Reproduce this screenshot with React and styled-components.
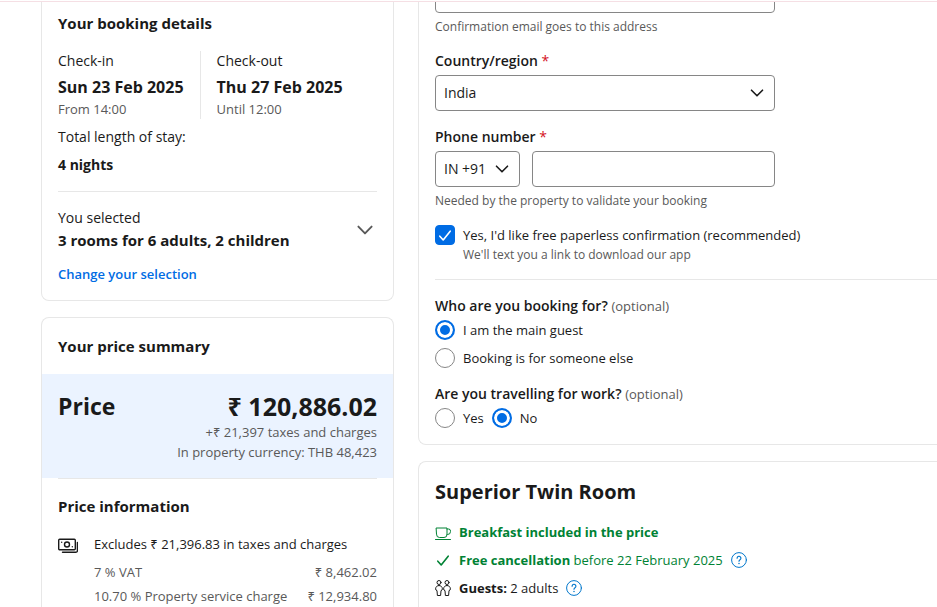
import React, { useState } from "react";
import styled, { createGlobalStyle } from "styled-components";

const GlobalStyle = createGlobalStyle`
  * {
    box-sizing: border-box;
  }

  body {
    margin: 0;
    background: #fff;
    color: #1a1a1a;
    font-family: "Segoe UI", "Open Sans", "Noto Sans", sans-serif;
    font-size: 13px;
    line-height: 20px;
  }
`;

const Page = styled.div`
  display: flex;
  flex-direction: column;
  min-height: 100vh;
  overflow: hidden;
`;

const TopBar = styled.header`
  height: 2px;
  border-bottom: 1px solid #f5dfe4;
`;

const Columns = styled.main`
  flex: 1;
  display: grid;
  grid-template-columns: 353px minmax(0, 1fr);
  gap: 24px;
  padding-left: 41px;
`;

const Column = styled.div`
  display: flex;
  flex-direction: column;
  gap: 16px;
`;

const Card = styled.section`
  border: 1px solid #e7e7e7;
  border-radius: 8px;
  ${({ $open }) =>
    $open === "top" &&
    "border-top: 0; border-top-left-radius: 0; border-top-right-radius: 0;"}
  ${({ $open }) =>
    $open === "bottom" &&
    "flex: 1; border-bottom: 0; border-bottom-left-radius: 0; border-bottom-right-radius: 0;"}
  ${({ $bleed }) =>
    $bleed &&
    "border-right: 0; border-top-right-radius: 0; border-bottom-right-radius: 0;"}
`;

const CardBody = styled.div`
  padding: ${({ $top = 16, $right = 16, $bottom = 16 }) =>
    `${$top}px ${$right}px ${$bottom}px 16px`};
`;

const Heading = styled.h2`
  margin: 0;
  font-size: 15px;
  font-weight: 700;
  line-height: 24px;
`;

const Divider = styled.hr`
  margin: ${({ $flush }) => ($flush ? "0 16px" : "16px 0")};
  border: 0;
  border-top: 1px solid #e7e7e7;
`;

const Dates = styled.div`
  display: flex;
  margin: 16px 0 8px;
`;

const DateBlock = styled.div`
  display: flex;
  flex-direction: column;

  & + & {
    margin-left: 16px;
    padding-left: 16px;
    border-left: 1px solid #e7e7e7;
  }
`;

const Medium = styled.span`
  font-size: 14px;
  font-weight: 500;
`;

const BigText = styled.strong`
  font-size: 15px;
  font-weight: 700;
  line-height: 24px;
`;

const DateText = styled(BigText)`
  margin-top: 4px;
  font-size: 16px;
`;

const Muted = styled.span`
  color: #595959;
  font-size: 13px;
`;

const Stay = styled.div`
  display: flex;
  flex-direction: column;
  gap: 8px;
  font-size: 14px;
`;

const SelectedRow = styled.div`
  display: flex;
  justify-content: space-between;
  align-items: center;
  margin-bottom: 12px;
`;

const SelectedText = styled.div`
  display: flex;
  flex-direction: column;
`;

const IconButton = styled.button`
  display: flex;
  padding: 0;
  border: 0;
  background: none;
  color: ${({ $color = "#595959" }) => $color};
  cursor: pointer;
`;

const TextLink = styled.a`
  display: block;
  color: #006ce4;
  font-weight: 600;
  text-decoration: none;
`;

const PricePanel = styled.div`
  display: flex;
  justify-content: space-between;
  padding: 16px;
  background: #ebf3ff;
`;

const PriceTitle = styled.div`
  font-size: ${({ $large }) => ($large ? "25px" : "23px")};
  font-weight: 700;
  line-height: 32px;
`;

const PriceAmount = styled.div`
  display: flex;
  flex-direction: column;
  text-align: right;
`;

const PriceInfo = styled.div`
  display: grid;
  grid-template-columns: 20px 1fr;
  gap: 16px;
  margin-top: 16px;
`;

const Charges = styled.dl`
  display: grid;
  grid-template-columns: 1fr auto;
  gap: 4px;
  margin: 8px 0 0;
  color: #595959;

  dd {
    margin: 0;
    text-align: right;
  }
`;

const Field = styled.div`
  display: flex;
  flex-direction: column;
  gap: 4px;
  max-width: 340px;
  margin-bottom: 16px;
`;

const Label = styled.label`
  font-size: 14px;
  font-weight: 600;
`;

const Required = styled.span`
  color: #d4111e;
  font-weight: 400;
`;

const Hint = styled.div`
  margin-bottom: -2px;
  color: #595959;
  font-size: 12px;
  line-height: 20px;
`;

const Input = styled.input`
  flex: 1;
  min-width: 0;
  height: 36px;
  padding: 0 8px;
  border: 1px solid #868686;
  border-radius: 4px;
  background: #fff;
  color: inherit;
  font: inherit;
`;

const CutOff = styled.div`
  display: flex;
  align-items: flex-end;
  height: 11px;
  overflow: hidden;

  input {
    flex-shrink: 0;
  }
`;

const SelectBox = styled.div`
  display: grid;
  align-items: center;
  width: ${({ $width = "100%" }) => $width};

  > * {
    grid-area: 1 / 1;
  }

  svg {
    justify-self: end;
    margin-right: 8px;
    pointer-events: none;
  }
`;

const Select = styled.select`
  appearance: none;
  width: 100%;
  height: 36px;
  padding: 0 8px;
  border: 1px solid #868686;
  border-radius: 4px;
  background: #fff;
  color: inherit;
  font: inherit;
  font-size: 14px;
`;

const PhoneRow = styled.div`
  display: flex;
  gap: 12px;
`;

const Choice = styled.label`
  display: flex;
  gap: 8px;
`;

const TickBox = styled.span`
  display: grid;
  place-items: center;
  width: 20px;
  height: 20px;
  color: #fff;

  > * {
    grid-area: 1 / 1;
  }

  svg {
    pointer-events: none;
  }
`;

const Checkbox = styled.input.attrs({ type: "checkbox" })`
  appearance: none;
  width: 20px;
  height: 20px;
  margin: 0;
  border: 1px solid #868686;
  border-radius: 4px;

  &:checked {
    border-color: #006ce4;
    background: #006ce4;
  }
`;

const Radio = styled.input.attrs({ type: "radio" })`
  appearance: none;
  flex-shrink: 0;
  width: 20px;
  height: 20px;
  margin: 0;
  border: 1px solid #868686;
  border-radius: 50%;
  background: #fff;

  &:checked {
    border: 2px solid #006ce4;
    background: #006ce4;
    box-shadow: inset 0 0 0 3px #fff;
  }
`;

const Question = styled.fieldset`
  margin: 0;
  padding: 0;
  border: 0;

  & + & {
    margin-top: 16px;
  }
`;

const Legend = styled.legend`
  margin-bottom: 4px;
  padding: 0;
  font-size: 14px;
  font-weight: 600;

  span {
    font-weight: 400;
  }
`;

const Options = styled.div`
  display: flex;
  flex-direction: ${({ $inline }) => ($inline ? "row" : "column")};
  gap: 8px;
`;

const RoomTitle = styled.h2`
  margin: 0 0 16px;
  font-size: 20px;
  font-weight: 700;
  line-height: 28px;
`;

const Features = styled.ul`
  display: flex;
  flex-direction: column;
  gap: 8px;
  margin: 0;
  padding: 0;
  list-style: none;
`;

const Feature = styled.li`
  display: flex;
  align-items: center;
  gap: 8px;
  color: ${({ $green }) => ($green ? "#008234" : "inherit")};
`;

const ChevronDown = ({ size = 20 }) => (
  <svg width={size} height={size} viewBox="0 0 20 20" fill="none" stroke="currentColor" strokeWidth="1.6" strokeLinecap="round" strokeLinejoin="round">
    <path d="M4.5 7.2 10 12.8l5.5-5.6" />
  </svg>
);

const Tick = () => (
  <svg width="16" height="16" viewBox="0 0 16 16" fill="none" stroke="currentColor" strokeWidth="1.6" strokeLinecap="round" strokeLinejoin="round">
    <path d="M2.8 9.2 6.2 13 13.2 4.2" />
  </svg>
);

const MoneyIcon = () => (
  <svg width="20" height="20" viewBox="0 0 20 20" fill="none" stroke="currentColor" strokeWidth="1.4" strokeLinecap="round" strokeLinejoin="round">
    <rect x="0.7" y="5.2" width="16.6" height="10.6" rx="1" />
    <circle cx="9" cy="10.5" r="2.5" />
    <path d="M3.7 8.3h.01M14.3 12.7h.01" />
    <path d="M19.4 8.5v8.200a1.600 1.600 0 0 1-1.600 1.600H4.500" />
  </svg>
);

const CupIcon = () => (
  <svg width="16" height="16" viewBox="0 0 16 16" fill="none" stroke="currentColor" strokeLinecap="round" strokeLinejoin="round">
    <path d="M1.500 4h10.500v6.500a3 3 0 0 1-3 3h-4.500a3 3 0 0 1-3-3z" />
    <path d="M12 5h1.500a2 2 0 0 1 2 2v.5a3 3 0 0 1-3 3H12" />
    <path d="M.5 15.500h15" />
  </svg>
);

const GuestsIcon = () => (
  <svg width="16" height="16" viewBox="0 0 16 16" fill="none" stroke="currentColor" strokeLinecap="round" strokeLinejoin="round">
    {[0, 8].map((x) => (
      <g key={x} transform={`translate(${x} 0)`}>
        <circle cx="4" cy="2.500" r="2" />
        <path d="M4 5.500c-2 0-3.300 1.400-3.400 3.400 0 .9.500 1.600 1.400 1.700l.4 4.900h3.200l.4-4.900c.9-.1 1.400-.8 1.400-1.700C7.300 6.900 6 5.500 4 5.500z" />
      </g>
    ))}
  </svg>
);

const HelpIcon = () => (
  <svg width="16" height="16" viewBox="0 0 16 16" fill="none" stroke="currentColor" strokeLinecap="round" strokeLinejoin="round">
    <circle cx="8" cy="8" r="7.400" />
    <path d="M6.100 6.200a1.900 1.900 0 1 1 2.900 1.600c-.6.400-1 .7-1 1.400" strokeWidth="1.200" />
    <path d="M8 11.500h.01" strokeWidth="1.500" />
  </svg>
);

const charges = [
  { name: "7 % VAT", amount: "₹ 8,462.02" },
  { name: "10.70 % Property service charge", amount: "₹ 12,934.80" },
];

const BookingDetails = () => (
  <Card $open="top">
    <CardBody $top={9}>
      <Heading>Your booking details</Heading>
      <Dates>
        <DateBlock>
          <Medium>Check-in</Medium>
          <DateText>Sun 23 Feb 2025</DateText>
          <Muted>From 14:00</Muted>
        </DateBlock>
        <DateBlock>
          <Medium>Check-out</Medium>
          <DateText>Thu 27 Feb 2025</DateText>
          <Muted>Until 12:00</Muted>
        </DateBlock>
      </Dates>
      <Stay>
        <Medium>Total length of stay:</Medium>
        <strong>4 nights</strong>
      </Stay>
      <Divider />
      <SelectedRow>
        <SelectedText>
          <Medium>You selected</Medium>
          <BigText>3 rooms for 6 adults, 2 children</BigText>
        </SelectedText>
        <IconButton type="button" aria-label="Show selected rooms">
          <ChevronDown size={24} />
        </IconButton>
      </SelectedRow>
      <TextLink href="#selection">Change your selection</TextLink>
    </CardBody>
  </Card>
);

const PriceSummary = () => (
  <Card $open="bottom">
    <CardBody>
      <Heading>Your price summary</Heading>
    </CardBody>
    <PricePanel>
      <PriceTitle>Price</PriceTitle>
      <PriceAmount>
        <PriceTitle $large>₹ 120,886.02</PriceTitle>
        <Muted>+₹ 21,397 taxes and charges</Muted>
        <Muted>In property currency: THB 48,423</Muted>
      </PriceAmount>
    </PricePanel>
    <Divider $flush />
    <CardBody $top={15} $bottom={0}>
      <Heading>Price information</Heading>
      <PriceInfo>
        <MoneyIcon />
        <div>
          <div>Excludes ₹ 21,396.83 in taxes and charges</div>
          <Charges>
            {charges.map((it) => (
              <React.Fragment key={it.name}>
                <dt>{it.name}</dt>
                <dd>{it.amount}</dd>
              </React.Fragment>
            ))}
          </Charges>
        </div>
      </PriceInfo>
    </CardBody>
  </Card>
);

const GuestForm = () => {
  const [paperless, setPaperless] = useState(true);
  const [guest, setGuest] = useState("main");
  const [work, setWork] = useState("no");

  return (
    <Card $open="top" $bleed>
      <CardBody $top={0} $right={0}>
        <Field>
          <CutOff>
            <Input type="email" aria-label="Email address" />
          </CutOff>
          <Hint>Confirmation email goes to this address</Hint>
        </Field>
        <Field>
          <Label htmlFor="country">
            Country/region <Required>*</Required>
          </Label>
          <SelectBox>
            <Select id="country" defaultValue="in">
              <option value="in">India</option>
            </Select>
            <ChevronDown />
          </SelectBox>
        </Field>
        <Field>
          <Label htmlFor="phone">
            Phone number <Required>*</Required>
          </Label>
          <PhoneRow>
            <SelectBox $width="85px">
              <Select aria-label="Country code" defaultValue="91">
                <option value="91">IN +91</option>
              </Select>
              <ChevronDown />
            </SelectBox>
            <Input id="phone" type="tel" />
          </PhoneRow>
          <Hint>Needed by the property to validate your booking</Hint>
        </Field>
        <Choice>
          <TickBox>
            <Checkbox
              checked={paperless}
              onChange={(e) => setPaperless(e.target.checked)}
            />
            {paperless && <Tick />}
          </TickBox>
          <div>
            Yes, I'd like free paperless confirmation (recommended)
            <Hint>We'll text you a link to download our app</Hint>
          </div>
        </Choice>
        <Divider />
        <Question>
          <Legend>
            Who are you booking for? <Muted>(optional)</Muted>
          </Legend>
          <Options>
            <Choice>
              <Radio name="guest" checked={guest === "main"} onChange={() => setGuest("main")} />
              I am the main guest
            </Choice>
            <Choice>
              <Radio name="guest" checked={guest === "other"} onChange={() => setGuest("other")} />
              Booking is for someone else
            </Choice>
          </Options>
        </Question>
        <Question>
          <Legend>
            Are you travelling for work? <Muted>(optional)</Muted>
          </Legend>
          <Options $inline>
            <Choice>
              <Radio name="work" checked={work === "yes"} onChange={() => setWork("yes")} />
              Yes
            </Choice>
            <Choice>
              <Radio name="work" checked={work === "no"} onChange={() => setWork("no")} />
              No
            </Choice>
          </Options>
        </Question>
      </CardBody>
    </Card>
  );
};

const RoomCard = () => (
  <Card $open="bottom" $bleed>
    <CardBody $bottom={0}>
      <RoomTitle>Superior Twin Room</RoomTitle>
      <Features>
        <Feature $green>
          <CupIcon />
          <strong>Breakfast included in the price</strong>
        </Feature>
        <Feature $green>
          <Tick />
          <span>
            <strong>Free cancellation</strong> before 22 February 2025
          </span>
          <IconButton type="button" $color="#0077cc" aria-label="About cancellation">
            <HelpIcon />
          </IconButton>
        </Feature>
        <Feature>
          <GuestsIcon />
          <span>
            <strong>Guests:</strong> 2 adults
          </span>
          <IconButton type="button" $color="#0077cc" aria-label="About guests">
            <HelpIcon />
          </IconButton>
        </Feature>
      </Features>
    </CardBody>
  </Card>
);

const App = () => {
  return (
    <>
      <GlobalStyle />
      <Page>
        <TopBar />
        <Columns>
          <Column>
            <BookingDetails />
            <PriceSummary />
          </Column>
          <Column>
            <GuestForm />
            <RoomCard />
          </Column>
        </Columns>
      </Page>
    </>
  );
};

export default App;
